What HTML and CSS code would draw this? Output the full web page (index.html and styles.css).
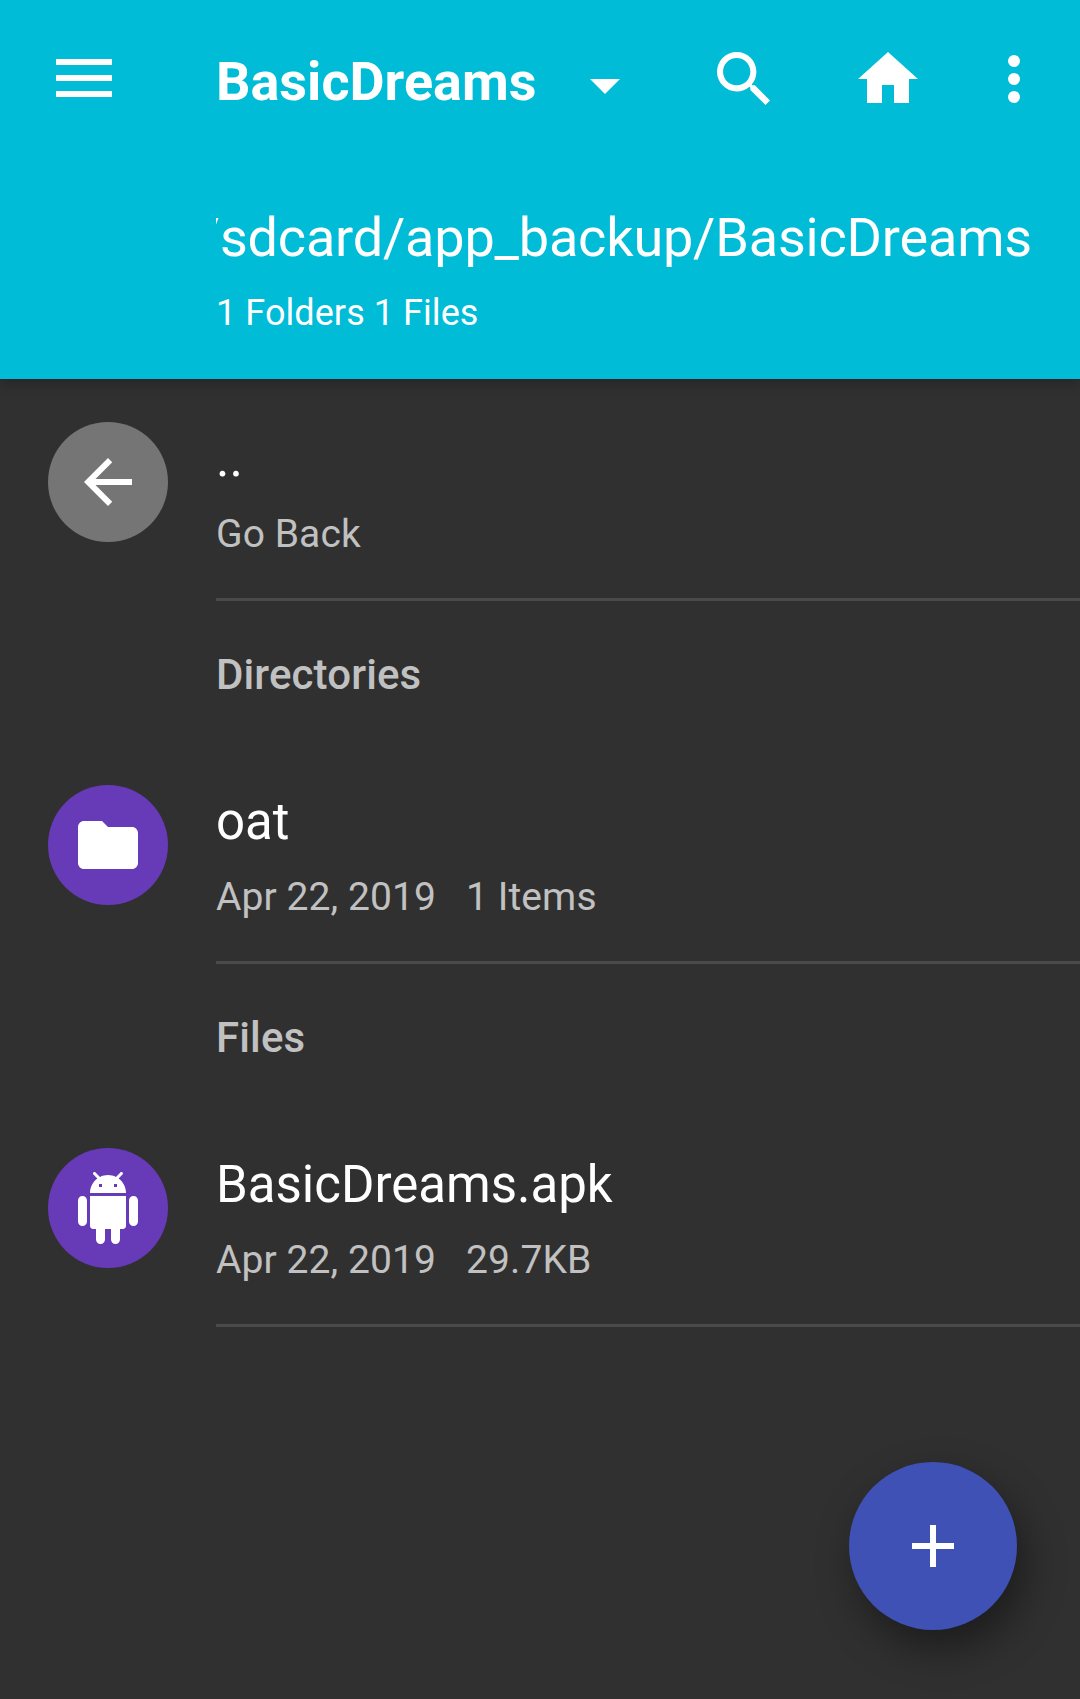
FILE: index.html
```html
<!DOCTYPE html>
<html lang="en">
<head>
<meta charset="utf-8">
<title>BasicDreams</title>
<link rel="stylesheet" href="styles.css">
</head>
<body>
<header class="appbar">
  <div class="toolbar">
    <svg class="menu" viewBox="0 0 56 38"><path d="M0 0h56v6H0zM0 16h56v6H0zM0 32h56v6H0z"/></svg>
    <h1 class="title">BasicDreams</h1>
    <svg class="caret" viewBox="0 0 30 15"><path d="M0 0h30L15 15z"/></svg>
    <svg class="search" viewBox="3 3 17.49 17.49"><path d="M15.5 14h-.79l-.28-.27A6.471 6.471 0 0 0 16 9.5 6.5 6.5 0 1 0 9.5 16c1.61 0 3.09-.59 4.23-1.57l.27.28v.79l5 4.99L20.49 19l-4.99-5zm-6 0C7.01 14 5 11.99 5 9.5S7.01 5 9.5 5 14 7.01 14 9.5 11.99 14 9.5 14z"/></svg>
    <svg class="home" viewBox="2 3 20 17"><path d="M10 20v-6h4v6h5v-8h3L12 3 2 12h3v8z"/></svg>
    <svg class="more" viewBox="0 0 12 48"><circle cx="6" cy="6" r="6"/><circle cx="6" cy="24" r="6"/><circle cx="6" cy="42" r="6"/></svg>
  </div>
  <div class="path"><span>/sdcard/app_backup/BasicDreams</span></div>
  <div class="summary">1 Folders 1 Files</div>
</header>
<main class="list">
  <div class="row">
    <div class="avatar back"><svg viewBox="0 0 24 24"><path d="M20 11H7.83l5.59-5.59L12 4l-8 8 8 8 1.41-1.41L7.83 13H20v-2z"/></svg></div>
    <div class="details"><div class="name">..</div><div class="meta">Go Back</div></div>
  </div>
  <h2 class="section">Directories</h2>
  <div class="row">
    <div class="avatar"><svg viewBox="0 0 24 24"><path d="M10 4H4c-1.1 0-1.99.9-1.99 2L2 18c0 1.100.9 2 2 2h16c1.100 0 2-.9 2-2V8c0-1.100-.9-2-2-2h-8l-2-2z"/></svg></div>
    <div class="details"><div class="name">oat</div><div class="meta"><span>Apr 22, 2019</span><span>1 Items</span></div></div>
  </div>
  <h2 class="section">Files</h2>
  <div class="row">
    <div class="avatar"><svg viewBox="0 0 24 24"><path d="M6 18c0 .55.45 1 1 1h1v3.500c0 .83.67 1.500 1.500 1.500s1.500-.67 1.500-1.500V19h2v3.500c0 .83.67 1.500 1.500 1.500s1.500-.67 1.500-1.500V19h1c.55 0 1-.45 1-1V8H6v10zM3.500 8C2.670 8 2 8.670 2 9.500v7c0 .83.67 1.500 1.500 1.500S5 17.330 5 16.500v-7C5 8.670 4.330 8 3.500 8zm17 0c-.83 0-1.500.67-1.500 1.500v7c0 .83.67 1.500 1.500 1.500s1.500-.67 1.500-1.500v-7c0-.83-.67-1.500-1.500-1.500zm-4.970-5.840l1.300-1.300c.2-.2.2-.51 0-.71-.2-.2-.51-.2-.71 0l-1.480 1.480C13.850 1.230 12.950 1 12 1c-.96 0-1.860.23-2.660.63L7.850.15c-.2-.2-.51-.2-.71 0-.2.2-.2.51 0 .71l1.310 1.310C6.970 3.260 6 5.010 6 7h12c0-1.990-.97-3.750-2.470-4.840zM10 5H9V4h1v1zm5 0h-1V4h1v1z"/></svg></div>
    <div class="details"><div class="name">BasicDreams.apk</div><div class="meta"><span>Apr 22, 2019</span><span>29.7KB</span></div></div>
  </div>
</main>
<button class="fab" aria-label="Add"><svg viewBox="0 0 42 42"><path d="M18 0h6v18h18v6H24v18h-6V24H0v-6h18z"/></svg></button>
</body>
</html>
```

FILE: styles.css
```css
* { box-sizing: border-box; }
body { margin: 0; height: 1699px; overflow: hidden; background: #303030; color: #fff; font-family: Roboto, sans-serif; }
svg { display: block; fill: #fff; flex: none; }
.appbar { height: 379px; background: #00bcd7; position: relative; box-shadow: 0 4px 12px rgba(0,0,0,.25); }
.toolbar { height: 160px; display: flex; align-items: flex-start; padding-left: 56px; }
.menu { width: 56px; height: 38px; margin-top: 59px; }
.title { width: 321px; margin: 50px 0 0 104px; font-size: 54px; line-height: 64px; font-weight: 700; white-space: nowrap; }
.caret { width: 30px; height: 15px; margin: 79px 0 0 53px; }
.search { width: 53px; height: 53px; margin: 52px 0 0 97px; }
.home { width: 60px; height: 51px; margin: 52px 0 0 88px; }
.more { width: 12px; height: 48px; margin: 55px 0 0 90px; }
.path { margin: 46px 48px 0 216px; height: 64px; display: flex; justify-content: flex-end; overflow: hidden; white-space: nowrap; font-size: 54px; line-height: 64px; letter-spacing: -.18px; }
.summary { margin: 22px 0 0 216px; font-size: 36px; line-height: 43px; letter-spacing: .07px; }
.row { height: 222px; display: flex; padding-left: 48px; }
.avatar { width: 120px; height: 120px; margin: 43px 48px 0 0; flex: none; border-radius: 50%; background: #673ab7; display: grid; place-items: center; }
.avatar svg { width: 72px; height: 72px; }
.back { background: #757575; }
.details { flex: 1; border-bottom: 3px solid #4a4a4a; padding-top: 50px; }
.name { font-size: 51px; line-height: 60px; }
.meta { display: flex; gap: 30px; margin-top: 22px; font-size: 39px; line-height: 46px; letter-spacing: .08px; color: #c1c1c1; }
.section { margin: 0; height: 141px; padding: 49px 0 0 216px; font-size: 42px; line-height: 49px; font-weight: 500; letter-spacing: .12px; color: #c1c1c1; }
.fab { position: absolute; left: 849px; top: 1462px; width: 168px; height: 168px; padding: 0; border: 0; border-radius: 50%; background: #3f51b5; display: grid; place-items: center; box-shadow: 8px 18px 40px rgba(0,0,0,.42); }
.fab svg { width: 42px; height: 42px; }
```
